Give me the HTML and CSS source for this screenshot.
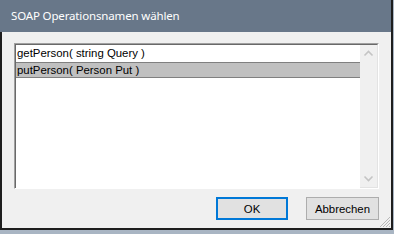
FILE: index.html
```html
<!DOCTYPE html>
<html>
<head>
<meta charset="utf-8">
<link rel="stylesheet" href="styles.css">
</head>
<body>
<div class="window">
  <div class="titlebar"><span class="title">SOAP Operationsnamen wählen</span></div>
  <div class="body">
    <div class="listbox">
      <div class="items">
        <div class="item">getPerson( string Query )</div>
        <div class="item selected">putPerson( Person Put )</div>
      </div>
      <div class="scrollbar">
        <svg class="arrow" width="17" height="17" viewBox="0 0 17 17"><path d="M4.5 10.5 L8.5 6.5 L12.5 10.5" fill="none" stroke="#c4c4c4" stroke-width="1.6"/></svg>
        <svg class="arrow" width="17" height="17" viewBox="0 0 17 17"><path d="M4.5 6.5 L8.5 10.5 L12.5 6.5" fill="none" stroke="#c4c4c4" stroke-width="1.6"/></svg>
      </div>
    </div>
    <div class="buttons">
      <button class="btn default">OK</button>
      <button class="btn">Abbrechen</button>
    </div>
    <svg class="grip" width="12" height="12" viewBox="0 0 12 12">
      <path d="M11 1 L1 11 M11 4 L4 11 M11 7 L7 11 M11 10 L10 11" stroke="#b8b8b8" stroke-width="1"/>
    </svg>
  </div>
</div>
</body>
</html>
```
FILE: styles.css
```css
html, body {
  margin: 0;
  padding: 0;
}
body {
  width: 394px;
  height: 234px;
  overflow: hidden;
  background: #a9b5c3;
}
.window {
  width: 394px;
  height: 234px;
  display: flex;
  flex-direction: column;
  box-sizing: border-box;
}
.titlebar {
  height: 32px;
  flex: none;
  background: #687789;
  border-right: 2px solid #1e1e1e;
  width: 393px;
  display: flex;
  align-items: center;
  padding-left: 11px;
  box-sizing: border-box;
}
.title {
  font-family: "Noto Sans", sans-serif;
  font-size: 11.5px;
  letter-spacing: -0.15px;
  color: #ffffff;
  padding-bottom: 1px;
}
.body {
  position: relative;
  height: 198px;
  flex: none;
  width: 393px;
  box-sizing: border-box;
  background: #f0f0f0;
  border-left: 2px solid #1e1e1e;
  border-right: 2px solid #1e1e1e;
  border-bottom: 2px solid #1e1e1e;
  padding: 11px 12px 0 12px;
  display: flex;
  flex-direction: column;
}
.listbox {
  height: 146px;
  box-sizing: border-box;
  border-top: 1px solid #a0a0a0;
  border-left: 1px solid #a0a0a0;
  border-right: 1px solid #ffffff;
  border-bottom: 1px solid #ffffff;
  display: flex;
}
.items {
  flex: 1;
  background: #ffffff;
  border-top: 1px solid #696969;
  border-left: 1px solid #696969;
  display: flex;
  flex-direction: column;
  padding-top: 1px;
}
.item {
  height: 16px;
  line-height: 15px;
  padding-left: 1px;
  font-family: "Liberation Sans", Arial, sans-serif;
  font-size: 11.4px;
  color: #000000;
  box-sizing: border-box;
}
.selected {
  background: #c0c0c0;
  border-top: 1px solid #808080;
  border-bottom: 1px solid #808080;
  line-height: 14px;
}
.scrollbar {
  width: 17px;
  flex: none;
  background: #f0f0f0;
  border-top: 1px solid #696969;
  border-right: 1px solid #e3e3e3;
  border-bottom: 1px solid #e3e3e3;
  display: flex;
  flex-direction: column;
  justify-content: space-between;
}
.arrow {
  display: block;
}
.buttons {
  display: flex;
  justify-content: flex-end;
  gap: 18px;
  margin-top: 8px;
}
.btn {
  height: 23px;
  margin: 0;
  padding: 0;
  box-sizing: border-box;
  background: #e1e1e1;
  border: 1px solid #adadad;
  font-family: "Liberation Sans", Arial, sans-serif;
  font-size: 11.4px;
  color: #000000;
  width: 73px;
}
.default {
  width: 72px;
  border: 2px solid #0078d7;
}
.grip {
  position: absolute;
  right: 0;
  bottom: 0;
}
```
